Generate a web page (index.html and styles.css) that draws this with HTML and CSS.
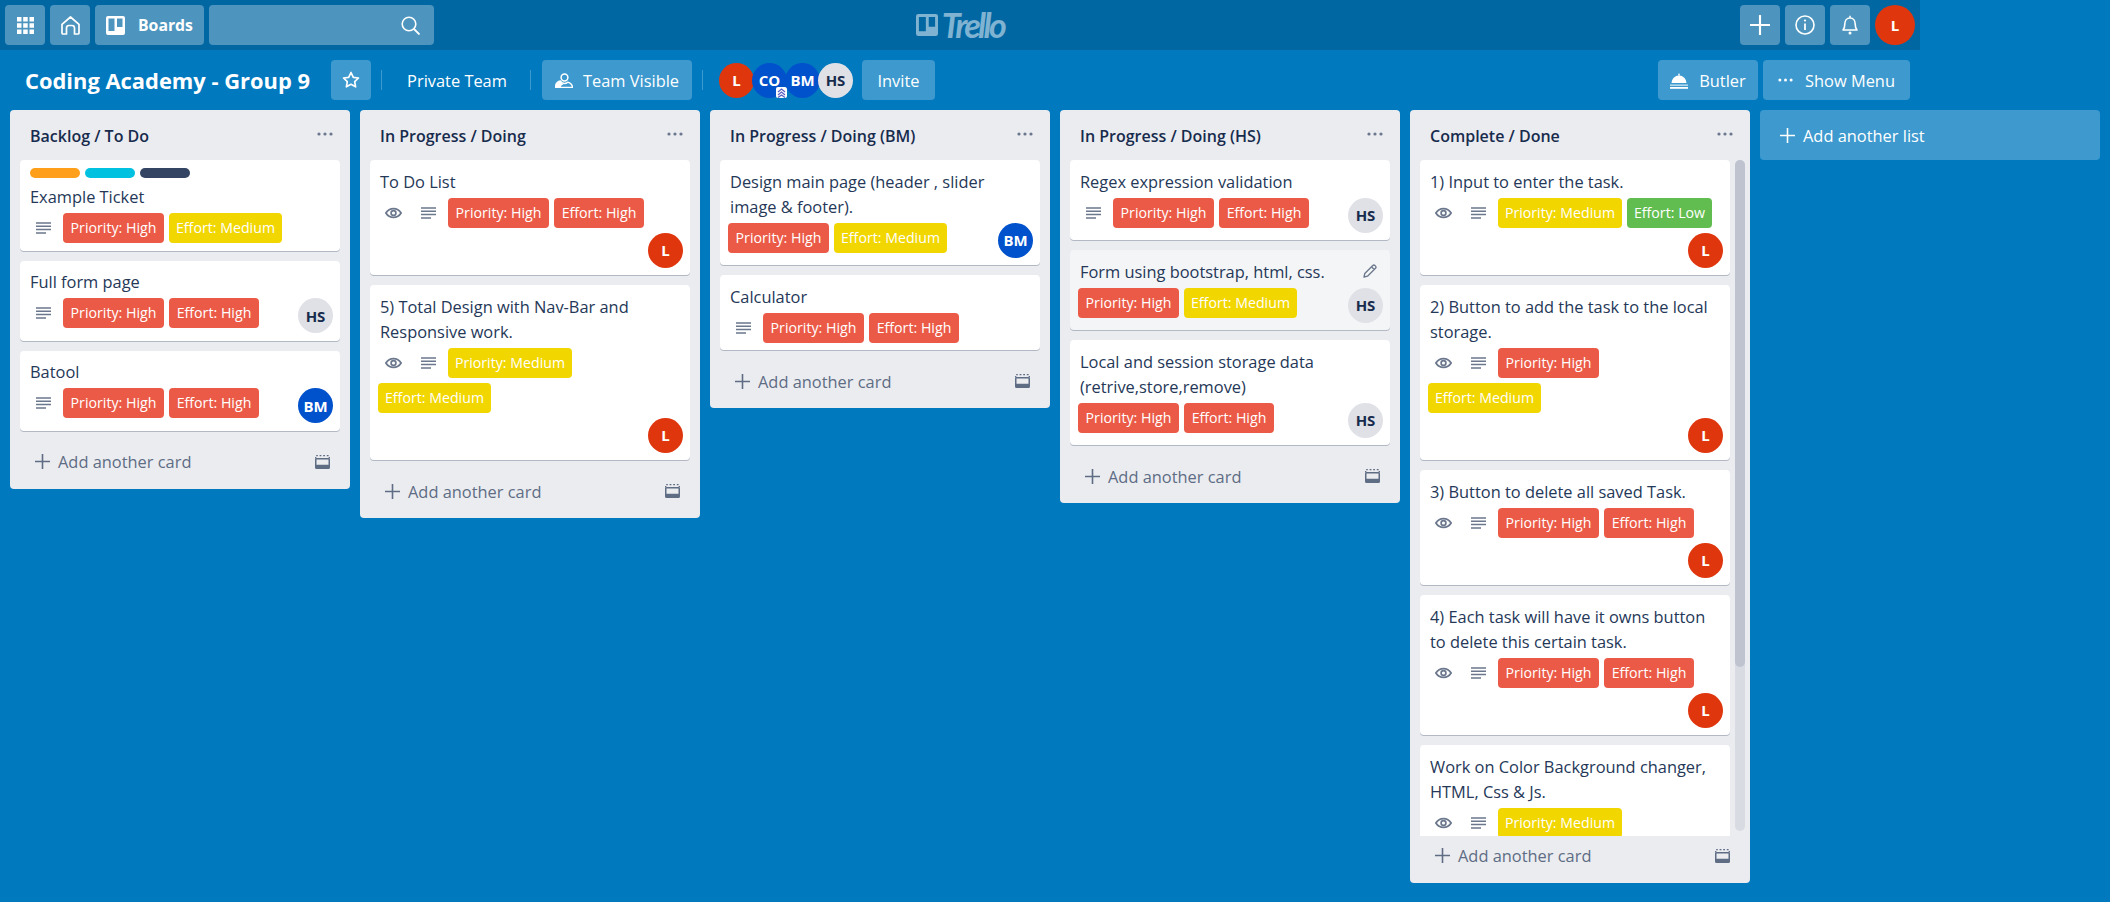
FILE: index.html
```html
<!DOCTYPE html>
<html lang="en">
<head>
<meta charset="utf-8">
<title>Coding Academy - Group 9 | Trello</title>
<link rel="stylesheet" href="styles.css">
</head>
<body>
<svg class="sprite" xmlns="http://www.w3.org/2000/svg">
  <symbol id="i-eye" viewBox="0 0 17 12"><path d="M.9 6C4.500 .2 12.500 .2 16.100 6 12.500 11.800 4.500 11.800 .9 6Z" fill="none" stroke="currentColor" stroke-width="1.800"/><circle cx="8.500" cy="6" r="2.400" fill="none" stroke="currentColor" stroke-width="1.700"/></symbol>
  <symbol id="i-desc" viewBox="0 0 15 12"><path d="M0 1h15M0 4.300h15M0 7.600h15M0 11h10" stroke="currentColor" stroke-width="1.500" fill="none"/></symbol>
  <symbol id="i-plus" viewBox="0 0 15 15"><path d="M7.500 0v15M0 7.500h15" stroke="currentColor" stroke-width="1.600" fill="none"/></symbol>
  <symbol id="i-template" viewBox="0 0 15 14"><path d="M1.200 .7h1.600M4.600 .7h1.800M8.200 .7h1.800M11.800 .7h1.800M.7 2v1.500M14.300 2v1.500" stroke="currentColor" stroke-width="1.300" fill="none"/><path fill-rule="evenodd" d="M1.500 3H13.500A1.500 1.500 0 0 1 15 4.500V12.500A1.500 1.500 0 0 1 13.500 14H1.500A1.500 1.500 0 0 1 0 12.500V4.500A1.500 1.500 0 0 1 1.500 3ZM1.500 4.500V9.800H13.500V4.500Z" fill="currentColor"/></symbol>
  <symbol id="i-dots" viewBox="0 0 16 4"><circle cx="2" cy="2" r="1.600" fill="currentColor"/><circle cx="8" cy="2" r="1.600" fill="currentColor"/><circle cx="14" cy="2" r="1.600" fill="currentColor"/></symbol>
  <symbol id="i-board" viewBox="0 0 19 19"><path fill-rule="evenodd" d="M2 0h15a2 2 0 0 1 2 2v15a2 2 0 0 1-2 2H2a2 2 0 0 1-2-2V2a2 2 0 0 1 2-2Zm.5 2.500v12.500h6V2.500Zm8.500 0v8.500h5.500V2.500Z" fill="currentColor"/></symbol>
</svg>

<header class="topbar">
  <nav class="topbar-left">
    <button class="top-btn square" aria-label="Apps">
      <svg class="ic-grid" viewBox="0 0 17 17"><path fill="#fff" d="M0 0h4.500v4.500H0zM6.200 0h4.500v4.500H6.200zM12.500 0H17v4.500h-4.500zM0 6.200h4.500v4.500H0zM6.200 6.200h4.500v4.500H6.200zM12.500 6.200H17v4.500h-4.500zM0 12.500h4.500V17H0zM6.200 12.500h4.500V17H6.200zM12.500 12.500H17V17h-4.500z"/></svg>
    </button>
    <button class="top-btn square" aria-label="Home">
      <svg class="ic-home" viewBox="0 0 19 19"><path d="M1 17V8.300L9.500 1 18 8.300V17a1 1 0 0 1-1 1h-3.500V12a2.500 2.500 0 0 0-2.500-2.500H8A2.500 2.500 0 0 0 5.500 12v6H2a1 1 0 0 1-1-1Z" fill="none" stroke="#fff" stroke-width="1.700" stroke-linejoin="round"/></svg>
    </button>
    <button class="top-btn boards">
      <svg class="ic-board"><use href="#i-board"/></svg>
      <span>Boards</span>
    </button>
    <div class="search">
      <svg class="ic-search" viewBox="0 0 19 19"><circle cx="8" cy="8" r="6.800" fill="none" stroke="#fff" stroke-width="1.600"/><path d="M13 13l5.500 5.500" stroke="#fff" stroke-width="1.800"/></svg>
    </div>
  </nav>
  <a class="logo">
    <svg class="logo-mark"><use href="#i-board"/></svg>
    <span class="logo-text">Trello</span>
  </a>
  <nav class="topbar-right">
    <button class="top-btn square" aria-label="Create"><svg class="ic-top"><use href="#i-plus"/></svg></button>
    <button class="top-btn square" aria-label="Information">
      <svg class="ic-top" viewBox="0 0 20 20"><circle cx="10" cy="10" r="9" fill="none" stroke="#fff" stroke-width="1.600"/><path d="M10 8.500v6.500" stroke="#fff" stroke-width="1.800"/><circle cx="10" cy="5.500" r="1.100" fill="#fff"/></svg>
    </button>
    <button class="top-btn square" aria-label="Notifications">
      <svg class="ic-top" viewBox="0 0 20 20"><path d="M3 15c1.500-1.500 1.800-3 1.800-6 0-3.500 2-6 5.200-6s5.200 2.500 5.200 6c0 3 .3 4.500 1.800 6Z" fill="none" stroke="#fff" stroke-width="1.600" stroke-linejoin="round"/><path d="M10 .8v2" stroke="#fff" stroke-width="1.600"/><circle cx="10" cy="18" r="1.500" fill="#fff"/></svg>
    </button>
    <span class="avatar avatar-top red">L</span>
  </nav>
</header>

<section class="boardbar">
  <h1 class="board-title">Coding Academy - Group 9</h1>
  <button class="bar-btn star" aria-label="Star">
    <svg class="ic-star" viewBox="0 0 18 18"><path d="M9 1.500l2.300 4.800 5.200.7-3.800 3.600.9 5.200L9 13.300l-4.600 2.500.9-5.200L1.500 7l5.200-.7Z" fill="none" stroke="#fff" stroke-width="1.700" stroke-linejoin="round"/></svg>
  </button>
  <span class="divider first"></span>
  <span class="plain-btn private">Private Team</span>
  <span class="divider"></span>
  <button class="bar-btn team">
    <svg class="ic-team" viewBox="0 0 18 15"><circle cx="9.500" cy="4.500" r="3.400" fill="none" stroke="#fff" stroke-width="1.500"/><path d="M.5 14.500c0-3.500 2-6 5-6.500.8 1.800 2.200 2.500 4 2.500 1.300 0 2.300-.4 3.200-1.300 2.400.8 4.800 2.300 4.800 5.300Z" fill="none" stroke="#fff" stroke-width="1.400" stroke-linejoin="round"/><path d="M.5 14.500c0-3.500 2-6 5-6.500.8 1.800 2 3 3 3.500-2.200.6-2.700 1.800-2.700 3Z" fill="#fff"/></svg>
    <span>Team Visible</span>
  </button>
  <span class="divider second"></span>
  <div class="members">
    <span class="avatar board-avatar red">L</span>
    <span class="avatar board-avatar blue">CO
      <svg class="admin-mark" viewBox="0 0 11 11"><rect width="11" height="11" rx="2" fill="#fff"/><path d="M2 5l3.500-3L9 5M2 8l3.500-3L9 8M2 10.500l3.500-2.500L9 10.500" stroke="#5a62c4" stroke-width="1.300" fill="none"/></svg>
    </span>
    <span class="avatar board-avatar blue">BM</span>
    <span class="avatar board-avatar grey">HS</span>
  </div>
  <button class="bar-btn invite">Invite</button>
  <button class="bar-btn butler">
    <svg class="ic-butler" viewBox="0 0 18 17"><path d="M1.500 11a7.500 7.500 0 0 1 15 0Z" fill="#fff"/><path d="M7.800 3.500L9 1l1.200 2.500" fill="#fff"/><path d="M0 12.500h18v1.300H0z" fill="#cfe6f5"/><path d="M0 15h18v1.800H0z" fill="#fff"/></svg>
    <span>Butler</span>
  </button>
  <button class="bar-btn menu">
    <svg class="ic-menu"><use href="#i-dots"/></svg>
    <span>Show Menu</span>
  </button>
</section>

<main class="board">
  <section class="list">
    <header class="list-head"><h2>Backlog / To Do</h2><svg class="ic-dots"><use href="#i-dots"/></svg></header>
    <div class="cards">
      <article class="card">
        <div class="labels"><i class="label orange"></i><i class="label sky"></i><i class="label navy"></i></div>
        <p class="card-title">Example Ticket</p>
        <div class="badges">
          <span class="meta"><svg class="ic-desc"><use href="#i-desc"/></svg></span>
          <span class="tag high w-ph">Priority: High</span><span class="tag med w-em">Effort: Medium</span>
        </div>
      </article>
      <article class="card">
        <p class="card-title">Full form page</p>
        <div class="badges">
          <span class="meta"><svg class="ic-desc"><use href="#i-desc"/></svg></span>
          <span class="tag high w-ph">Priority: High</span><span class="tag high w-eh">Effort: High</span>
        </div>
        <span class="avatar card-avatar grey">HS</span>
      </article>
      <article class="card">
        <p class="card-title">Batool</p>
        <div class="badges">
          <span class="meta"><svg class="ic-desc"><use href="#i-desc"/></svg></span>
          <span class="tag high w-ph">Priority: High</span><span class="tag high w-eh">Effort: High</span>
        </div>
        <span class="avatar card-avatar blue">BM</span>
      </article>
    </div>
    <footer class="list-foot"><svg class="ic-plus"><use href="#i-plus"/></svg><span>Add another card</span><svg class="ic-template"><use href="#i-template"/></svg></footer>
  </section>

  <section class="list">
    <header class="list-head"><h2>In Progress / Doing</h2><svg class="ic-dots"><use href="#i-dots"/></svg></header>
    <div class="cards">
      <article class="card">
        <p class="card-title">To Do List</p>
        <div class="badges">
          <span class="meta"><svg class="ic-eye"><use href="#i-eye"/></svg></span>
          <span class="meta"><svg class="ic-desc"><use href="#i-desc"/></svg></span>
          <span class="tag high w-ph">Priority: High</span><span class="tag high w-eh">Effort: High</span>
        </div>
        <span class="avatar card-avatar red">L</span>
      </article>
      <article class="card">
        <p class="card-title">5) Total Design with Nav-Bar and Responsive work.</p>
        <div class="badges">
          <span class="meta"><svg class="ic-eye"><use href="#i-eye"/></svg></span>
          <span class="meta"><svg class="ic-desc"><use href="#i-desc"/></svg></span>
          <span class="tag med w-pm">Priority: Medium</span><span class="tag med w-em">Effort: Medium</span>
        </div>
        <span class="avatar card-avatar red">L</span>
      </article>
    </div>
    <footer class="list-foot"><svg class="ic-plus"><use href="#i-plus"/></svg><span>Add another card</span><svg class="ic-template"><use href="#i-template"/></svg></footer>
  </section>

  <section class="list">
    <header class="list-head"><h2>In Progress / Doing (BM)</h2><svg class="ic-dots"><use href="#i-dots"/></svg></header>
    <div class="cards">
      <article class="card">
        <p class="card-title">Design main page (header , slider image &amp; footer).</p>
        <div class="badges">
          <span class="tag high w-ph">Priority: High</span><span class="tag med w-em">Effort: Medium</span>
        </div>
        <span class="avatar card-avatar blue">BM</span>
      </article>
      <article class="card">
        <p class="card-title">Calculator</p>
        <div class="badges">
          <span class="meta"><svg class="ic-desc"><use href="#i-desc"/></svg></span>
          <span class="tag high w-ph">Priority: High</span><span class="tag high w-eh">Effort: High</span>
        </div>
      </article>
    </div>
    <footer class="list-foot"><svg class="ic-plus"><use href="#i-plus"/></svg><span>Add another card</span><svg class="ic-template"><use href="#i-template"/></svg></footer>
  </section>

  <section class="list">
    <header class="list-head"><h2>In Progress / Doing (HS)</h2><svg class="ic-dots"><use href="#i-dots"/></svg></header>
    <div class="cards">
      <article class="card">
        <p class="card-title">Regex expression validation</p>
        <div class="badges">
          <span class="meta"><svg class="ic-desc"><use href="#i-desc"/></svg></span>
          <span class="tag high w-ph">Priority: High</span><span class="tag high w-eh">Effort: High</span>
        </div>
        <span class="avatar card-avatar grey">HS</span>
      </article>
      <article class="card hovered">
        <svg class="ic-pencil" viewBox="0 0 14 14"><path d="M1 13l.8-3.500L9.800 1.500a1.500 1.500 0 0 1 2.100 0l.6.600a1.500 1.500 0 0 1 0 2.100L4.500 12.200ZM8.500 2.800l2.700 2.700" fill="none" stroke="currentColor" stroke-width="1.300" stroke-linejoin="round"/></svg>
        <p class="card-title">Form using bootstrap, html, css.</p>
        <div class="badges">
          <span class="tag high w-ph">Priority: High</span><span class="tag med w-em">Effort: Medium</span>
        </div>
        <span class="avatar card-avatar grey">HS</span>
      </article>
      <article class="card">
        <p class="card-title">Local and session storage data (retrive,store,remove)</p>
        <div class="badges">
          <span class="tag high w-ph">Priority: High</span><span class="tag high w-eh">Effort: High</span>
        </div>
        <span class="avatar card-avatar grey">HS</span>
      </article>
    </div>
    <footer class="list-foot"><svg class="ic-plus"><use href="#i-plus"/></svg><span>Add another card</span><svg class="ic-template"><use href="#i-template"/></svg></footer>
  </section>

  <section class="list">
    <header class="list-head"><h2>Complete / Done</h2><svg class="ic-dots"><use href="#i-dots"/></svg></header>
    <div class="scroll-area">
      <div class="cards narrow">
        <article class="card">
          <p class="card-title">1) Input to enter the task.</p>
          <div class="badges">
            <span class="meta"><svg class="ic-eye"><use href="#i-eye"/></svg></span>
            <span class="meta"><svg class="ic-desc"><use href="#i-desc"/></svg></span>
            <span class="tag med w-pm">Priority: Medium</span><span class="tag low w-el">Effort: Low</span>
          </div>
          <span class="avatar card-avatar red">L</span>
        </article>
        <article class="card">
          <p class="card-title">2) Button to add the task to the local storage.</p>
          <div class="badges">
            <span class="meta"><svg class="ic-eye"><use href="#i-eye"/></svg></span>
            <span class="meta"><svg class="ic-desc"><use href="#i-desc"/></svg></span>
            <span class="tag high w-ph">Priority: High</span><span class="tag med w-em">Effort: Medium</span>
          </div>
          <span class="avatar card-avatar red">L</span>
        </article>
        <article class="card">
          <p class="card-title">3) Button to delete all saved Task.</p>
          <div class="badges">
            <span class="meta"><svg class="ic-eye"><use href="#i-eye"/></svg></span>
            <span class="meta"><svg class="ic-desc"><use href="#i-desc"/></svg></span>
            <span class="tag high w-ph">Priority: High</span><span class="tag high w-eh">Effort: High</span>
          </div>
          <span class="avatar card-avatar red">L</span>
        </article>
        <article class="card">
          <p class="card-title">4) Each task will have it owns button to delete this certain task.</p>
          <div class="badges">
            <span class="meta"><svg class="ic-eye"><use href="#i-eye"/></svg></span>
            <span class="meta"><svg class="ic-desc"><use href="#i-desc"/></svg></span>
            <span class="tag high w-ph">Priority: High</span><span class="tag high w-eh">Effort: High</span>
          </div>
          <span class="avatar card-avatar red">L</span>
        </article>
        <article class="card">
          <p class="card-title">Work on Color Background changer, HTML, Css &amp; Js.</p>
          <div class="badges">
            <span class="meta"><svg class="ic-eye"><use href="#i-eye"/></svg></span>
            <span class="meta"><svg class="ic-desc"><use href="#i-desc"/></svg></span>
            <span class="tag med w-pm">Priority: Medium</span>
          </div>
        </article>
      </div>
      <div class="scroll-track"><div class="scroll-thumb"></div></div>
    </div>
    <footer class="list-foot clipped"><svg class="ic-plus"><use href="#i-plus"/></svg><span>Add another card</span><svg class="ic-template"><use href="#i-template"/></svg></footer>
  </section>

  <button class="add-list"><svg class="ic-addlist"><use href="#i-plus"/></svg><span>Add another list</span></button>
</main>
</body>
</html>
```

FILE: styles.css
```css
* { box-sizing: border-box; }
html, body { margin: 0; height: 100%; overflow: hidden; }
body {
  width: 2110px;
  height: 902px;
  background: #0079bf;
  font-family: "Open Sans", "Noto Sans", "Liberation Sans", sans-serif;
  font-size: 16.4px;
  color: #172b4d;
}
button { font: inherit; color: inherit; border: 0; margin: 0; padding: 0; cursor: pointer; }
h1, h2, p { margin: 0; }
.sprite { display: none; }
svg { display: block; flex: none; }

/* top bar */
.topbar {
  width: 1920px;
  height: 50px;
  padding: 5px;
  background: #0067a3;
  display: grid;
  grid-template-columns: 1fr auto 1fr;
  align-items: center;
  color: #fff;
}
.topbar-left, .topbar-right { display: flex; gap: 5px; align-items: center; }
.topbar-right { justify-content: flex-end; }
.top-btn {
  height: 40px;
  background: rgba(255, 255, 255, .3);
  border-radius: 4px;
  display: flex;
  align-items: center;
  justify-content: center;
  color: #fff;
}
.top-btn.square { width: 40px; }
.boards { width: 109px; justify-content: flex-start; padding-left: 11px; gap: 13px; font-weight: 700; font-size: 15.8px; }
.ic-board { width: 19px; height: 19px; color: #fff; }
.search { width: 225px; height: 40px; background: rgba(255, 255, 255, .3); border-radius: 4px; display: flex; align-items: center; justify-content: flex-end; padding-right: 14px; }
.ic-grid { width: 17px; height: 17px; }
.ic-home { width: 19px; height: 19px; }
.ic-search { width: 19px; height: 19px; }
.ic-top { width: 20px; height: 20px; color: #fff; }
.logo { display: flex; align-items: center; gap: 4px; color: rgba(255, 255, 255, .5); }
.logo-mark { width: 22px; height: 22px; }
.logo-text { font-family: "Lato", sans-serif; font-style: italic; font-weight: 700; font-size: 34px; line-height: 30px; letter-spacing: -2.6px; }

/* board bar */
.boardbar {
  width: 1920px;
  height: 60px;
  padding: 10px;
  display: flex;
  align-items: center;
  color: #fff;
}
.board-title { width: 321px; padding-left: 15px; font-size: 21.9px; font-weight: 700; white-space: nowrap; }
.bar-btn {
  height: 40px;
  border-radius: 4px;
  background: rgba(255, 255, 255, .24);
  color: #fff;
  display: flex;
  align-items: center;
  justify-content: center;
  flex: none;
}
.star { width: 40px; }
.ic-star { width: 18px; height: 18px; }
.divider { width: 1px; height: 20px; background: rgba(255, 255, 255, .24); flex: none; }
.divider.first { margin-left: 10px; }
.divider.second { margin-left: 10px; }
.plain-btn { width: 148px; padding-left: 2px; text-align: center; }
.team { width: 150px; margin-left: 11px; gap: 10px; }
.ic-team { width: 18px; height: 15px; }
.members { display: flex; margin-left: 16px; }
.avatar {
  width: 35px;
  height: 35px;
  border-radius: 50%;
  display: flex;
  align-items: center;
  justify-content: center;
  font-weight: 700;
  font-size: 15px;
  color: #fff;
  flex: none;
}
.avatar.red { background: #df360e; }
.avatar.blue { background: #0052cc; }
.avatar.grey { background: #dfe1e6; color: #172b4d; }
.board-avatar { position: relative; }
.board-avatar + .board-avatar { margin-left: -2px; }
.admin-mark { position: absolute; right: 0; bottom: 0; width: 11px; height: 11px; }
.avatar-top { width: 40px; height: 40px; }
.invite { width: 73px; margin-left: 9px; }
.butler { width: 100px; margin-left: auto; gap: 11px; }
.ic-butler { width: 18px; height: 17px; }
.menu { width: 147px; margin-left: 5px; gap: 12px; }
.ic-menu { width: 15px; height: 4px; }

/* board */
.board { display: flex; align-items: flex-start; gap: 10px; padding: 0 10px; }
.list { width: 340px; flex: none; background: #ebecf0; border-radius: 4px; }
.list-head { height: 50px; padding: 2px 17px 0 20px; display: flex; align-items: center; justify-content: space-between; }
.list-head h2 { font-size: 16px; font-weight: 600; line-height: 25px; }
.ic-dots { width: 16px; height: 4px; color: #6b778c; margin-top: -5px; }
.cards { margin: 0 10px; }
.card {
  position: relative;
  display: flow-root;
  background: #fff;
  border-radius: 4px;
  box-shadow: 0 1px 0 rgba(9, 30, 66, .25);
  padding: 7.5px 12px 2.5px 8px;
  margin-bottom: 10px;
}
.card.hovered { background: #f4f5f7; }
.labels { display: flex; gap: 5px; padding: .5px 0 0 2px; margin-bottom: 5px; }
.label { width: 50px; height: 10px; border-radius: 5px; }
.orange { background: #ff9f1a; }
.sky { background: #00c2e0; }
.navy { background: #344563; }
.card-title { padding: 1px 0 0 2px; line-height: 25px; margin-bottom: 4px; font-size: 16.4px; color: #253858; }
.badges { float: left; font-size: 0; }
.meta { display: inline-flex; width: 30px; height: 30px; margin: 0 5px 5px 0; align-items: center; justify-content: center; vertical-align: top; color: #6b778c; }
.ic-eye { width: 17px; height: 12px; }
.ic-desc { width: 15px; height: 12px; }
.tag {
  display: inline-block;
  height: 30px;
  margin: 0 5px 5px 0;
  border-radius: 4px;
  line-height: 30px;
  font-size: 14.2px;
  color: #fff;
  text-align: center;
  vertical-align: top;
  white-space: nowrap;
}
.w-ph { width: 101px; }
.w-eh { width: 90px; }
.w-em { width: 113px; }
.w-pm { width: 124px; }
.w-el { width: 85px; }
.high { background: #eb5a46; }
.med { background: #f2d600; }
.low { background: #61bd4f; }
.card-avatar { float: right; margin: 0 -5px 5px 0; }
.ic-pencil { position: absolute; top: 14px; right: 13px; width: 14px; height: 14px; color: #6b778c; }

.list-foot {
  height: 48px;
  padding: 0 20px 6px 25px;
  display: flex;
  align-items: center;
  color: #5e6c84;
}
.list-foot span { margin-left: 8px; flex: 1; }
.ic-plus { width: 15px; height: 15px; }
.ic-template { width: 15px; height: 14px; }

/* scrolling list */
.scroll-area { display: flex; height: 676px; overflow: hidden; padding-right: 5px; }
.cards.narrow { width: 310px; margin: 0 5px 0 10px; flex: none; }
.scroll-track { width: 10px; height: 671px; background: #d9dbe3; border-radius: 5px; flex: none; }
.scroll-thumb { height: 507px; background: #bfc3cf; border-radius: 5px; }
.list-foot.clipped { height: 46.7px; padding-bottom: 7px; }

.add-list {
  width: 340px;
  height: 50px;
  flex: none;
  background: rgba(255, 255, 255, .24);
  border-radius: 4px;
  color: #fff;
  display: flex;
  align-items: center;
  padding-left: 20px;
  gap: 8px;
}
.ic-addlist { width: 15px; height: 15px; }
```
